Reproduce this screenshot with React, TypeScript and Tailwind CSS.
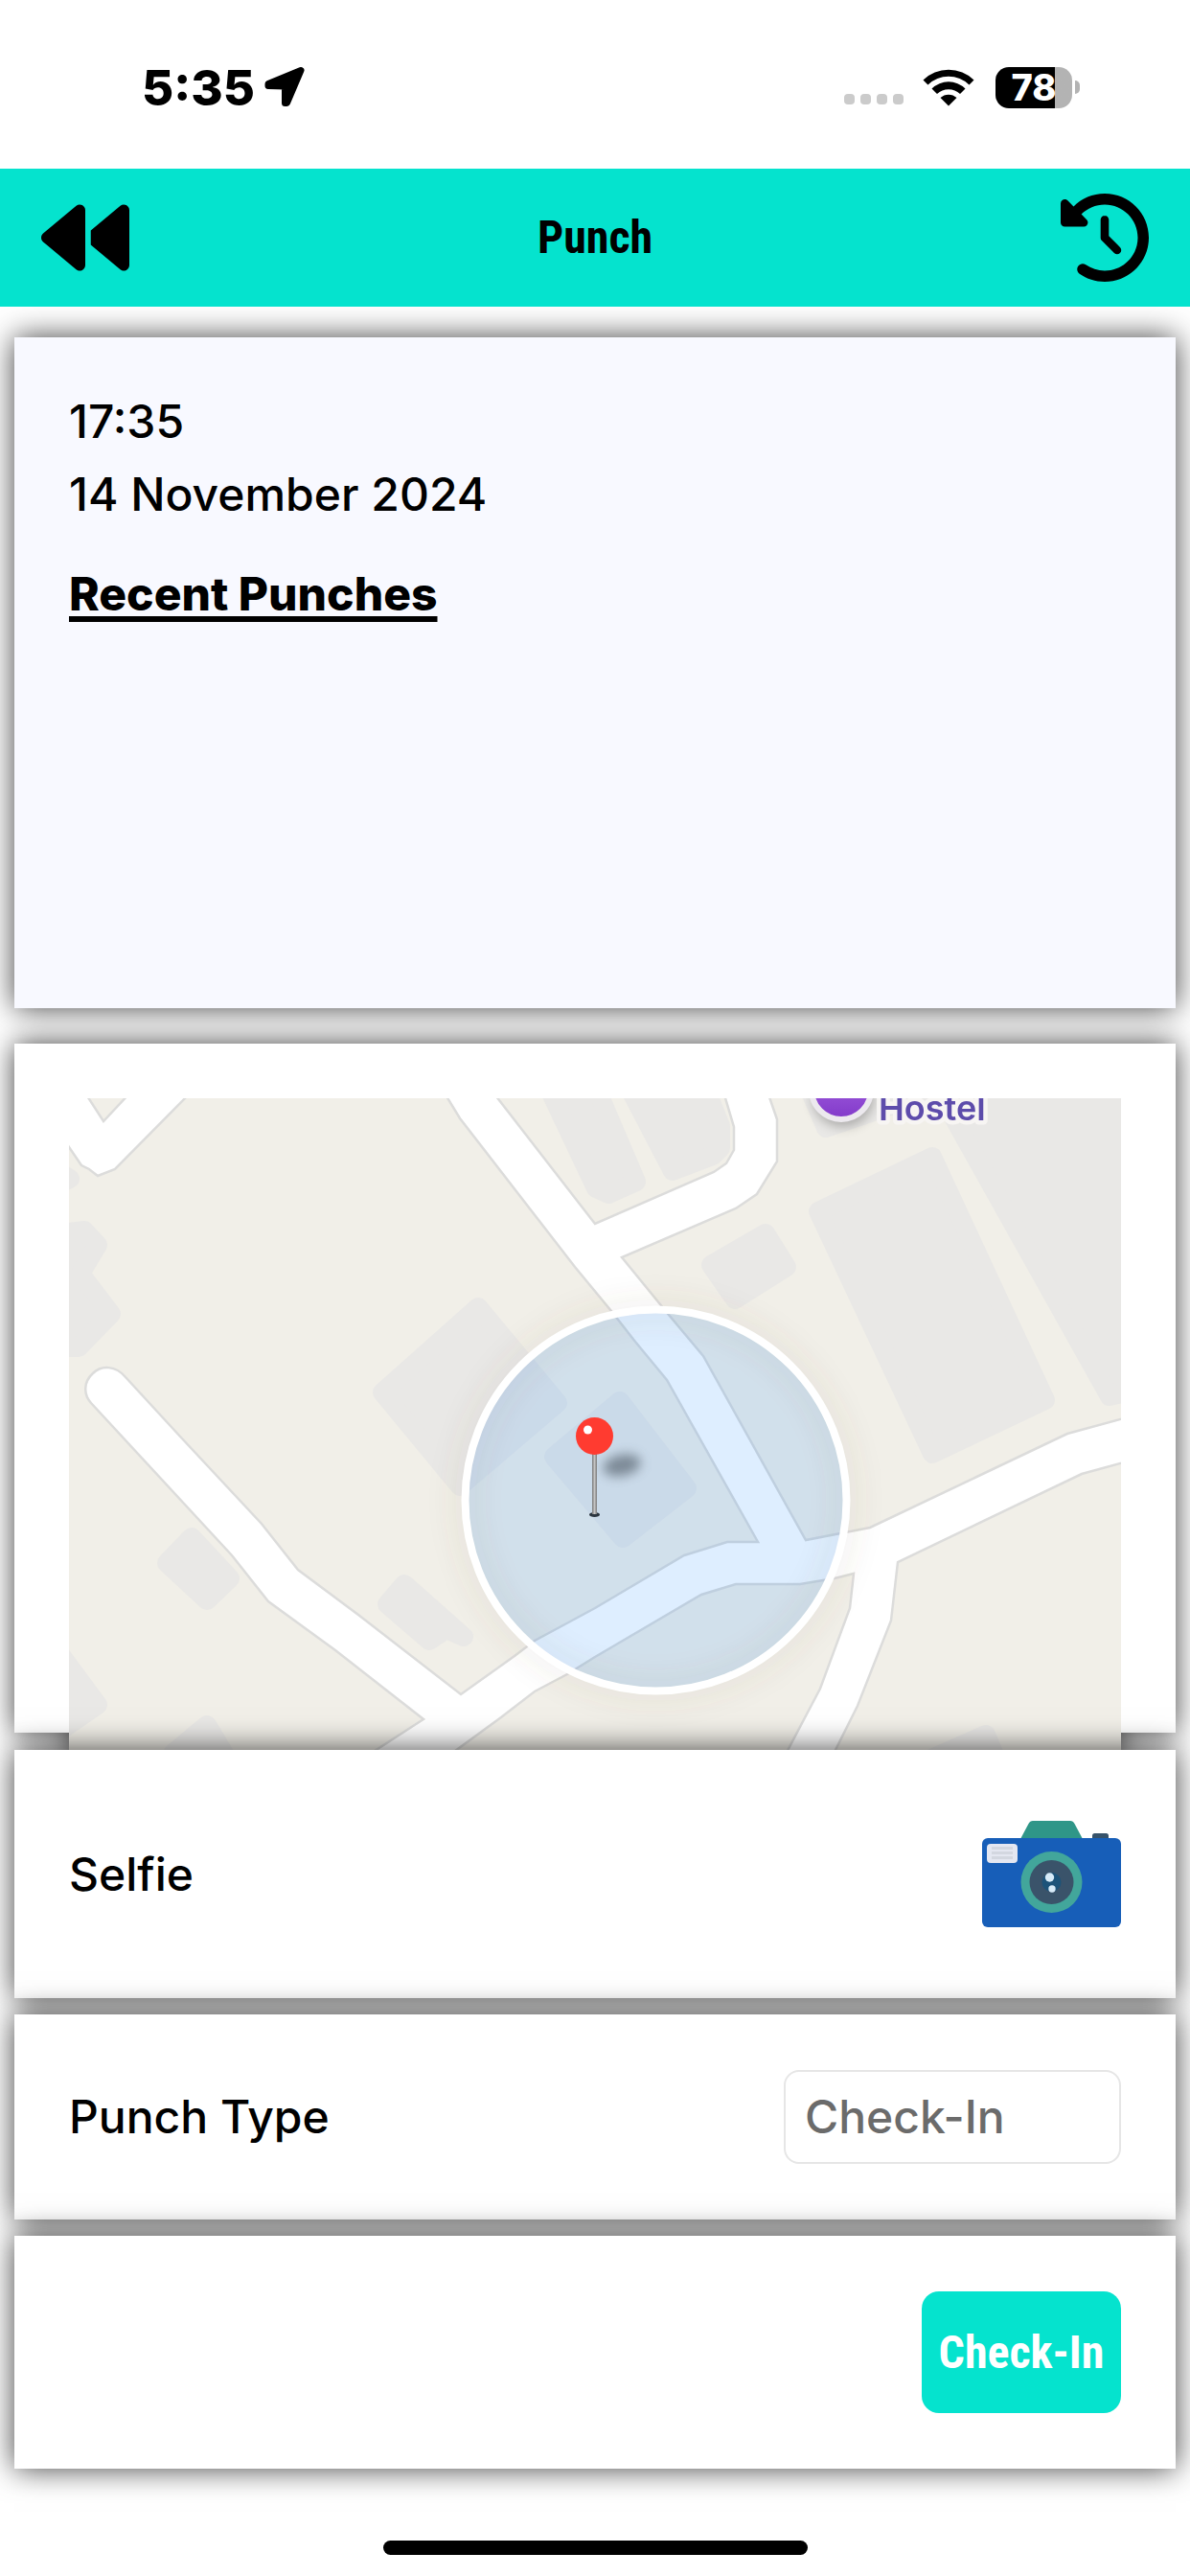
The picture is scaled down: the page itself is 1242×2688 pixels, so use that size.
import type { ReactNode } from "react";
import { FaBackward, FaClockRotateLeft } from "react-icons/fa6";
import { twMerge } from "tailwind-merge";

const StatusBar = () => {
  return (
    <div className="flex h-44 items-center justify-between pt-1.5 pl-[148px] pr-[115px]">
      <div className="flex items-center gap-2.5">
        <span className="text-[51px] leading-none font-extrabold">5:35</span>
        <svg viewBox="0 0 42 42" className="size-[42px]">
          <path
            d="M38 3.500L4 17.500V19.500L21.500 20V37.500H23.500Z"
            fill="#000"
            stroke="#000"
            strokeWidth="7"
            strokeLinejoin="round"
          />
        </svg>
      </div>
      <div className="flex items-end">
        <div className="mr-5 flex gap-1.5 pb-1">
          <span className="size-[11px] rounded-sm bg-[#cbcbcb]" />
          <span className="size-[11px] rounded-sm bg-[#cbcbcb]" />
          <span className="size-[11px] rounded-sm bg-[#cbcbcb]" />
          <span className="size-[11px] rounded-sm bg-[#cbcbcb]" />
        </div>
        <svg viewBox="0 0 54 40" className="mr-[22px] mb-0.5 h-10 w-[54px]">
          <path d="M0.500 12.500A38 38 0 0 1 53.500 12.500L48.500 17.500A31 31 0 0 0 5.500 17.500Z" />
          <path d="M9.500 21.500A25 25 0 0 1 44.500 21.500L39 27A17.500 17.500 0 0 0 15 27Z" />
          <path d="M18.500 31A12.500 12.500 0 0 1 35.500 31L27 39.500Z" />
        </svg>
        <div className="flex items-center gap-[3px]">
          <div className="flex h-[43px] w-20 items-center justify-center rounded-[14px] bg-linear-to-r from-black from-78% to-[#b3b3b3] to-78% text-[38px] leading-none font-extrabold text-white">
            78
          </div>
          <span className="h-3.5 w-[5px] rounded-r-full bg-[#b3b3b3]" />
        </div>
      </div>
    </div>
  );
};

const Header = () => {
  return (
    <header className="relative z-10 grid h-36 grid-cols-3 items-center bg-[#05e3ce] px-[43px]">
      <button type="button" aria-label="Back" className="justify-self-start">
        <FaBackward className="size-[92px]" />
      </button>
      <h1 className="text-center font-['Roboto_Condensed',Roboto,sans-serif] text-[48px] leading-none font-bold">
        Punch
      </h1>
      <button type="button" aria-label="History" className="justify-self-end">
        <FaClockRotateLeft className="size-[92px]" />
      </button>
    </header>
  );
};

const Card = ({
  className,
  children,
}: {
  className?: string;
  children: ReactNode;
}) => {
  return (
    <section
      className={twMerge(
        "relative mx-[15px] bg-white px-[57px] py-[58px] shadow-[0_0_30px_rgba(0,0,0,0.75)]",
        className,
      )}
    >
      {children}
    </section>
  );
};

const LocationMap = () => {
  return (
    <svg
      viewBox="72 1146 1098 690"
      preserveAspectRatio="xMidYMin slice"
      className="block h-[690px] w-full"
      role="img"
      aria-label="Map of your location"
    >
      <defs>
        <filter id="soft" x="-50%" y="-100%" width="200%" height="300%">
          <feGaussianBlur stdDeviation="6" />
        </filter>
        <filter id="glow" x="-20%" y="-20%" width="140%" height="140%">
          <feGaussianBlur stdDeviation="14" />
        </filter>
        <linearGradient id="poi" x1="0" y1="0" x2="0" y2="1">
          <stop offset="0" stopColor="#ad6be6" />
          <stop offset="1" stopColor="#8139c9" />
        </linearGradient>
        <linearGradient id="needle">
          <stop offset="0" stopColor="#777" />
          <stop offset="0.5" stopColor="#c4c4c4" />
          <stop offset="1" stopColor="#777" />
        </linearGradient>
      </defs>
      <rect x="72" y="1146" width="1098" height="690" fill="#f1efe8" />

      {/* buildings */}
      <g
        fill="#e9e8e6"
        stroke="#e9e8e6"
        strokeWidth="20"
        strokeLinejoin="round"
      >
        <path d="M60 1222L73 1230L60 1236Z" />
        <path d="M60 1287L88 1284L102 1299L84 1329L116 1371L82 1406H60Z" />
        <path d="M499 1364L399 1453L480 1551L582 1464Z" />
        <path d="M647 1462L578 1520L650 1605L717 1553Z" />
        <path d="M200 1604L174 1631L216 1670L240 1647Z" />
        <path d="M422 1653L404 1674L448 1712L466 1700L484 1708L422 1653Z" />
        <path d="M60 1722L102 1779L60 1808Z" />
        <path d="M216 1800L180 1830H234Z" />
        <path d="M1029 1810L970 1836H1040Z" />
        <path d="M570 1130H620L664 1233L635 1246L622 1240Z" />
        <path d="M654 1130H734L752 1175V1198L744 1206L702 1222Z" />
        <path d="M799 1287L742 1320L767 1356L821 1322Z" />
        <path d="M973 1207L854 1264L973 1517L1091 1461Z" />
        <path d="M975 1130H1190V1450L1158 1457L1003 1180Z" />
        <path d="M842 1130L862 1177L970 1140V1130Z" />
      </g>

      {/* roads */}
      <g fill="#fff" stroke="#dcdcdb" strokeWidth="2.500">
        <path d="M60 1176L72 1197L85 1216L93 1220L102 1227L120 1220L200 1139H137L108 1170L88 1139H60Z" />
        <path
          d="M463 1139L480 1167L600 1322L638 1368L663 1400L696 1440L791 1609
             H759L714 1623L621 1678L558 1712L537 1728L481 1768
             L374 1685L311 1638L273 1590L189 1500L131 1437
             C121 1425 106 1424 97 1433C87 1442 87 1455 95 1464
             L242 1623L280 1671L350 1722L442 1794L374 1838H460
             L523 1792L558 1765L592 1747L621 1729L732 1664L768 1653H835L871 1647L891 1642
             L887 1678L856 1762L816 1838H866L895 1780L930 1691L937 1630
             L1129 1538L1180 1524V1478L1114 1496L908 1594L841 1607
             L734 1415L698 1372L649 1312L768 1261L790 1246L811 1212V1168L801 1139
             H755L766 1176V1200L758 1214L745 1223L621 1277L514 1139Z"
        />
      </g>

      {/* hostel label */}
      <ellipse
        cx="880"
        cy="1146"
        rx="32"
        ry="30"
        fill="#000"
        opacity="0.25"
        filter="url(#soft)"
      />
      <circle
        cx="878"
        cy="1137"
        r="31"
        fill="url(#poi)"
        stroke="#ece9ee"
        strokeWidth="6"
      />
      <text
        x="917"
        y="1169"
        fill="#5d4cab"
        stroke="#f7f5f3"
        strokeWidth="9"
        strokeLinejoin="round"
        paintOrder="stroke"
        className="text-[36px] font-semibold"
      >
        Hostel
      </text>

      {/* punch radius */}
      <circle
        cx="684.500"
        cy="1565.500"
        r="199"
        fill="none"
        stroke="#6b5a3c"
        strokeOpacity="0.08"
        strokeWidth="24"
        filter="url(#glow)"
      />
      <circle
        cx="684.500"
        cy="1565.500"
        r="199"
        fill="#007aff"
        fillOpacity="0.13"
        stroke="#fff"
        strokeWidth="8"
      />

      {/* pin */}
      <ellipse
        cx="649"
        cy="1529"
        rx="20"
        ry="11"
        fill="#4a5560"
        opacity="0.6"
        transform="rotate(-12 649 1529)"
        filter="url(#soft)"
      />
      <ellipse cx="620.500" cy="1580.500" rx="5.500" ry="2.500" fill="#2c3640" />
      <rect x="618" y="1515" width="5" height="65" fill="url(#needle)" />
      <circle cx="620.500" cy="1498.500" r="19.500" fill="#ff3b30" />
      <circle cx="613.500" cy="1492" r="4.500" fill="#fff" />
    </svg>
  );
};

const CameraIcon = () => {
  return (
    <svg viewBox="0 0 145 143" className="h-[143px] w-[145px]">
      <path
        d="M40 35L48.500 19Q50 16 53 16H92Q95 16 96.500 19L105 35Z"
        fill="#2f9688"
      />
      <rect x="115" y="29" width="17" height="10" rx="2.500" fill="#37536b" />
      <rect y="34" width="145" height="93" rx="6" fill="#175eb8" />
      <rect x="5" y="40" width="32" height="20" rx="4" fill="#e4e7f1" />
      <path
        d="M10 44.500H32M10 49.500H32M10 54.500H32"
        stroke="#d3d7e0"
        strokeWidth="3"
      />
      <circle cx="72.500" cy="80" r="32" fill="#42a69b" />
      <circle cx="72.500" cy="80" r="23" fill="#3a536a" />
      <circle cx="72.500" cy="80" r="10" fill="#1d5379" />
      <circle cx="70.500" cy="75" r="4.700" fill="#d8ebf8" />
      <circle cx="73" cy="87" r="3.700" fill="#d8ebf8" />
    </svg>
  );
};

export default function App() {
  return (
    <div className="flex min-h-screen flex-col overflow-hidden bg-white font-[Inter,sans-serif] text-black">
      <StatusBar />
      <Header />

      <main className="flex flex-col pt-8 text-[48px] leading-[60px] font-medium">
        <Card className="mb-[37px] h-[700px] bg-[#f8f9ff]">
          <p className="mb-4">17:35</p>
          <p className="mb-11">14 November 2024</p>
          <h2 className="font-extrabold underline decoration-[6px] underline-offset-6">
            Recent Punches
          </h2>
        </Card>

        {/* the map runs past the card, so the shadow follows both shapes */}
        <Card className="mb-[18px] h-[719px] py-[57px] shadow-none drop-shadow-[0_0_15px_rgba(0,0,0,0.75)]">
          <LocationMap />
        </Card>

        <Card className="mb-[17px] flex items-center justify-between">
          <span id="selfie-label">Selfie</span>
          <button type="button" aria-labelledby="selfie-label">
            <CameraIcon />
          </button>
        </Card>

        <Card className="mb-[17px] flex items-center justify-between">
          <label htmlFor="punch-type">Punch Type</label>
          <select
            id="punch-type"
            className="h-[98px] w-[352px] appearance-none rounded-2xl border-2 border-[#e6e6e6] bg-white px-5 text-[#6b6b6b]"
          >
            <option>Check-In</option>
            <option>Check-Out</option>
          </select>
        </Card>

        <Card className="flex justify-end">
          <button
            type="button"
            className="h-[127px] w-[208px] rounded-[18px] bg-[#05e3ce] font-['Roboto_Condensed',Roboto,sans-serif] text-[48px] font-bold text-white"
          >
            Check-In
          </button>
        </Card>
      </main>

      <div className="mx-auto mt-auto mb-[22px] h-[15px] w-[443px] rounded-full bg-black" />
    </div>
  );
}
